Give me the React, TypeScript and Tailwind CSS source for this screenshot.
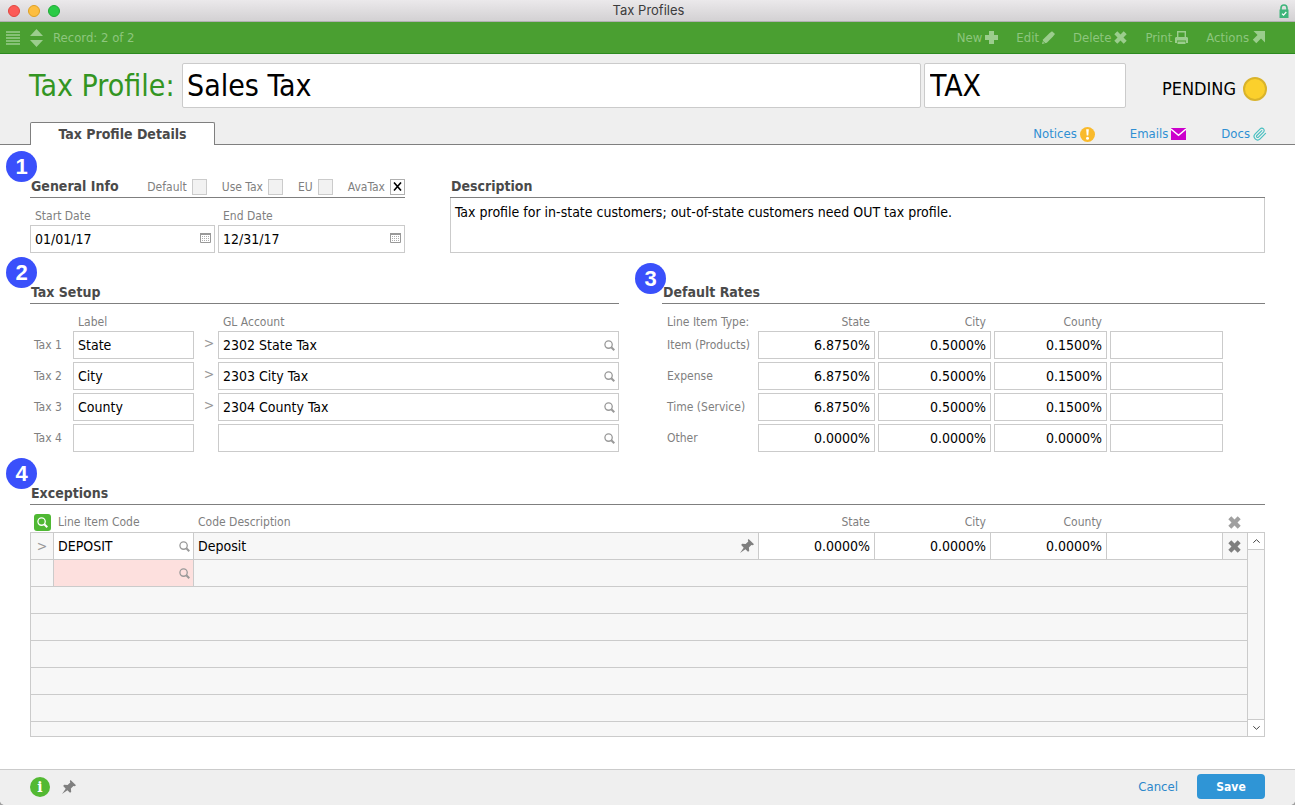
import type { ReactNode } from "react";
import { LuPaperclip } from "react-icons/lu";

const labelText = "text-[12px] leading-4 text-[#7f7f7f]";
const fieldBox = "h-7 w-full min-w-0 border border-[#cbcbcb] bg-white px-1 text-[14px] text-black outline-none";

function MagnifierIcon({ className = "text-[#999]" }: { className?: string }) {
  return (
    <svg className={className} width="11" height="11" viewBox="0 0 12 12" fill="none" stroke="currentColor">
      <circle cx="5" cy="5" r="4" strokeWidth="1.4" />
      <path d="M8 8l3.2 3.2" strokeWidth="2.2" />
    </svg>
  );
}

function CrossIcon({ className = "" }: { className?: string }) {
  return (
    <svg className={className} width="13" height="13" viewBox="0 0 13 13" fill="currentColor">
      <path d="M3.3.3 6.5 3.5 9.7.3 12.7 3.3 9.5 6.5l3.2 3.2-3 3-3.2-3.2-3.2 3.2-3-3L3.5 6.5.3 3.3z" />
    </svg>
  );
}

function PlusIcon() {
  return (
    <svg width="13" height="13" viewBox="0 0 13 13" fill="currentColor">
      <path d="M4 0h5v4h4v5H9v4H4V9H0V4h4z" />
    </svg>
  );
}

function PencilIcon() {
  return (
    <svg width="13" height="13" viewBox="0 0 13 13" fill="currentColor">
      <path d="M7.4 2.2 10 .2 13 3 11 5.6 4.9 11.7 0 13l1.3-4.700z" />
      <path d="M.9 10.2l2.1 2.1" stroke="#4a9f31" strokeWidth=".9" />
    </svg>
  );
}

function PrinterIcon() {
  return (
    <svg width="13" height="13" viewBox="0 0 13 13" fill="currentColor">
      <path fillRule="evenodd" d="M2 0h9v6h1.2l.8 1v5h-2V9.500H2V12H0V7l.8-1H2zM3.400 1.400V6h6.200V1.400z" />
      <path d="M2.500 10.500h8V13h-8z" />
    </svg>
  );
}

function ArrowIcon() {
  return (
    <svg width="13" height="13" viewBox="0 0 13 13" fill="currentColor">
      <path d="M1.500 0H13v11.500L9 7.500l-4.700 4.700L.800 8.700 5.500 4z" />
    </svg>
  );
}

function NoticeIcon() {
  return (
    <svg width="15" height="15" viewBox="0 0 15 15">
      <circle cx="7.500" cy="7.500" r="7.500" fill="#f9ba2c" />
      <path d="M6.200 2.300h2.600l-.5 6.200H6.700z" fill="#fff" />
      <circle cx="7.500" cy="11.200" r="1.500" fill="#fff" />
    </svg>
  );
}

function MailIcon() {
  return (
    <svg width="15" height="12" viewBox="0 0 15 12">
      <path d="M0 0h15v12H0z" fill="#cc00cc" />
      <path d="M0 1l7.500 6.300L15 1" fill="none" stroke="#fff" strokeWidth="1.400" />
    </svg>
  );
}

function CalendarIcon() {
  return (
    <svg width="11" height="10" viewBox="0 0 11 10" className="text-[#999]" fill="none" stroke="currentColor">
      <path d="M.5.5h10v9H.5z" />
      <path d="M0 1h11" strokeWidth="2" />
      <path d="M2 3.500h7M2 5.500h7M2 7.500h7" strokeDasharray="1 1" opacity=".8" />
    </svg>
  );
}

function PinIcon() {
  return (
    <svg width="14" height="14" viewBox="0 0 14 14" className="text-[#7f7f7f]" fill="currentColor">
      <path d="M8.600 0 14 5.200l-1.300 1-1.300-.3-2.500 2.500.3 3.600-1.200.8-2.600-2.500L0 14l3.700-5.300L1.200 6l.9-1.200 3.500.3 2.700-2.600-.5-1.400z" />
    </svg>
  );
}

function StepBadge({ n, place }: { n: number; place: string }) {
  return (
    <span className={`absolute z-10 flex size-[31px] items-center justify-center rounded-full bg-[#3a50fb] font-['Liberation_Sans',sans-serif] text-[22px] font-bold text-white ${place}`}>
      {n}
    </span>
  );
}

function SectionHead({ title, n, place = "-left-6 -top-[25px]", children }: { title: string; n?: number; place?: string; children?: ReactNode }) {
  return (
    <div className="relative flex h-[22px] items-center justify-between border-b border-[#7f7f7f]">
      {n && <StepBadge n={n} place={place} />}
      <h2 className="pl-px text-[14px] font-bold text-[#4a4a4a]">{title}</h2>
      {children}
    </div>
  );
}

function ToolButton({ label, icon }: { label: string; icon: ReactNode }) {
  return (
    <button className="flex items-center gap-[3px] text-[13px]">
      {label}
      <span className="text-[#9bcd8d]">{icon}</span>
    </button>
  );
}

function Tick({ label, checked = false }: { label: string; checked?: boolean }) {
  return (
    <label className={`flex items-center gap-[5px] ${labelText}`}>
      {label}
      <span className="grid">
        <input
          type="checkbox"
          defaultChecked={checked}
          className="peer col-start-1 row-start-1 h-4 w-[15px] appearance-none border border-[#cbcbcb] bg-[#f2f2f2] checked:border-[#b0b0b0] checked:bg-white"
        />
        <svg className="pointer-events-none invisible col-start-1 row-start-1 place-self-center peer-checked:visible" width="9" height="9" viewBox="0 0 9 9" stroke="#000" strokeWidth="1.600">
          <path d="M1 .5l7 8M8 .5l-7 8" />
        </svg>
      </span>
    </label>
  );
}

function DateField({ id, label, value }: { id: string; label: string; value: string }) {
  return (
    <div>
      <div className="flex h-[27px] items-end pb-px pl-[5px]">
        <label htmlFor={id} className={labelText}>{label}</label>
      </div>
      <div className="relative">
        <input id={id} defaultValue={value} className={fieldBox} />
        <button aria-label={`Pick ${label}`} className="absolute right-1 top-2">
          <CalendarIcon />
        </button>
      </div>
    </div>
  );
}

const taxes = [
  { label: "State", account: "2302 State Tax" },
  { label: "City", account: "2303 City Tax" },
  { label: "County", account: "2304 County Tax" },
  { label: "", account: "" },
];

const rateColumns = ["State", "City", "County", ""];

const rates = [
  { type: "Item (Products)", values: ["6.8750%", "0.5000%", "0.1500%", ""] },
  { type: "Expense", values: ["6.8750%", "0.5000%", "0.1500%", ""] },
  { type: "Time (Service)", values: ["6.8750%", "0.5000%", "0.1500%", ""] },
  { type: "Other", values: ["0.0000%", "0.0000%", "0.0000%", ""] },
];

const cell = "border-t border-[#cbcbcb] p-0";
const cellLine = "border-l border-t border-[#cbcbcb] p-0";

function ExceptionsTable() {
  return (
    <table className="flex-1 table-fixed border-separate border-spacing-0 bg-transparent">
      <colgroup>
        <col className="w-[23px]" />
        <col className="w-[140px]" />
        <col />
        <col className="w-[116px]" />
        <col className="w-[116px]" />
        <col className="w-[116px]" />
        <col className="w-[116px]" />
        <col className="w-[25px]" />
      </colgroup>
      <thead>
        <tr className={`h-[27px] ${labelText}`}>
          <th className="p-0 pl-1 pt-[7px] font-normal">
            <button aria-label="Search exceptions" className="flex size-[17px] items-center justify-center rounded-[3px] bg-[#4fb833]">
              <MagnifierIcon className="text-white" />
            </button>
          </th>
          <th className="p-0 pl-[5px] pt-[7px] text-left font-normal">Line Item Code</th>
          <th className="p-0 pl-[5px] pt-[7px] text-left font-normal">Code Description</th>
          {rateColumns.map((c, i) => (
            <th key={i} className="p-0 pr-1 pt-[7px] text-right font-normal">{c}</th>
          ))}
          <th className="p-0 pl-1.5 pt-[7px]">
            <button aria-label="Clear exceptions" className="block text-[#a0a0a0]">
              <CrossIcon />
            </button>
          </th>
        </tr>
      </thead>
      <tbody className="bg-[#f7f7f7] text-[14px] text-black">
        <tr className="h-[27px]">
          <td className={`${cellLine} text-center text-[#999]`}>
            <button aria-label="Open line">&gt;</button>
          </td>
          <td className={`${cellLine} bg-white`}>
            <div className="flex items-center pr-[3px]">
              <input aria-label="Line Item Code" defaultValue="DEPOSIT" className="h-[26px] w-full min-w-0 bg-transparent pl-1 outline-none" />
              <button aria-label="Look up code"><MagnifierIcon /></button>
            </div>
          </td>
          <td className={cellLine}>
            <div className="flex items-center justify-between pl-1 pr-1">
              Deposit
              <button aria-label="Pin line"><PinIcon /></button>
            </div>
          </td>
          {["0.0000%", "0.0000%", "0.0000%", ""].map((v, i) => (
            <td key={i} className={`${cellLine} bg-white`}>
              <input aria-label={`Exception rate ${i + 1}`} defaultValue={v} className="block h-[26px] w-full bg-transparent pr-1 text-right outline-none" />
            </td>
          ))}
          <td className={`${cellLine} pl-[5px]`}>
            <button aria-label="Remove line" className="block text-[#7f7f7f]"><CrossIcon /></button>
          </td>
        </tr>
        <tr className="h-[27px]">
          <td className={cellLine} />
          <td className={`${cellLine} bg-[#fde0de]`}>
            <div className="flex items-center pr-[3px]">
              <input aria-label="New Line Item Code" className="h-[26px] w-full min-w-0 bg-transparent pl-1 outline-none" />
              <button aria-label="Look up new code"><MagnifierIcon /></button>
            </div>
          </td>
          <td className={cellLine} />
          <td colSpan={5} className={cell} />
        </tr>
        {[0, 1, 2, 3, 4].map((i) => (
          <tr key={i} className="h-[27px]">
            <td colSpan={8} className={cellLine} />
          </tr>
        ))}
        <tr className="h-4">
          <td colSpan={8} className={`${cellLine} border-b`} />
        </tr>
      </tbody>
    </table>
  );
}

export default function App() {
  return (
    <div className="min-h-screen bg-[#a0a0a0] font-['DejaVu_Sans_Condensed','DejaVu_Sans',sans-serif]">
      <div className="flex min-h-screen flex-col overflow-hidden rounded-b-[5px] bg-white">
        <div className="flex h-[22px] items-center border-b border-[#b1b0b1] bg-linear-to-b from-[#ebe9eb] to-[#d3d1d3]">
          <div className="flex flex-1 gap-2 pl-2">
            <button aria-label="Close" className="size-3 rounded-full border border-[#e2463f] bg-[#fc5b57]" />
            <button aria-label="Minimise" className="size-3 rounded-full border border-[#dfa023] bg-[#fdbe41]" />
            <button aria-label="Zoom" className="size-3 rounded-full border border-[#1faa35] bg-[#2bcb46]" />
          </div>
          <h1 className="font-[Inter,sans-serif] text-[13px] text-[#3c3c3c]">Tax Profiles</h1>
          <div className="flex flex-1 justify-end pr-1.5">
            <svg width="10" height="14" viewBox="0 0 10 14" fill="none">
              <path d="M2 6V4a3 3 0 0 1 6 0v2" stroke="#3fb57b" strokeWidth="1.600" />
              <path d="M.5 5.500h9V14h-9z" fill="#3fb57b" />
              <path d="M3 9.700l1.500 1.500L7.300 8" stroke="#fff" strokeWidth="1.200" />
            </svg>
          </div>
        </div>

        <div className="flex h-8 items-center justify-between border-b border-[#2c8a1f] bg-[#4a9f31] pl-1.5 pr-[30px] text-[#8ec67e]">
          <div className="flex items-center gap-2.5 text-[#9bcd8d]">
            <button aria-label="Menu">
              <svg width="14" height="14" viewBox="0 0 14 14" stroke="currentColor" strokeWidth="1.600">
                <path d="M0 1h14M0 4h14M0 7h14M0 10h14M0 13h14" />
              </svg>
            </button>
            <button aria-label="Change record">
              <svg width="13" height="18" viewBox="0 0 13 18" fill="currentColor">
                <path d="M0 7l6.500-7L13 7zM0 11h13l-6.500 7z" />
              </svg>
            </button>
            <span className="text-[13px] text-[#8ec67e]">Record: 2 of 2</span>
          </div>
          <div className="flex gap-[18px]">
            <ToolButton label="New" icon={<PlusIcon />} />
            <ToolButton label="Edit" icon={<PencilIcon />} />
            <ToolButton label="Delete" icon={<CrossIcon />} />
            <ToolButton label="Print" icon={<PrinterIcon />} />
            <ToolButton label="Actions" icon={<ArrowIcon />} />
          </div>
        </div>

        <header className="border-b border-[#7f7f7f] bg-[#efefef] pl-[29px] pr-7 pt-[9px]">
          <div className="flex items-center">
            <label htmlFor="profile" className="w-[153px] shrink-0 whitespace-nowrap text-[30px] leading-[45px] text-[#339522]">Tax Profile:</label>
            <input id="profile" defaultValue="Sales Tax" className="h-[45px] min-w-0 flex-1 rounded-xs border border-[#cbcbcb] bg-white px-1 text-[30px] text-black outline-none" />
            <input aria-label="Profile code" defaultValue="TAX" className="ml-[3px] h-[45px] w-[202px] rounded-xs border border-[#cbcbcb] bg-white px-[5px] text-[30px] text-black outline-none" />
            <div className="flex w-[141px] items-center justify-end gap-[7px] pt-1.5 text-[18px] text-black">
              PENDING
              <span className="size-6 rounded-full border-2 border-[#d9b32b] bg-[#fbd02c]" />
            </div>
          </div>
          <div className="mt-3.5 flex h-[22px] justify-between">
            <button className="ml-px h-[23px] w-[185px] rounded-t-xs border border-b-0 border-[#7f7f7f] bg-white text-[14px] font-bold text-[#4a4a4a]">Tax Profile Details</button>
            <nav className="flex items-center gap-[35px] pt-0.5 text-[13px] text-[#2f8fd3]">
              <a href="#notices" className="flex items-center gap-[3px]">Notices<NoticeIcon /></a>
              <a href="#emails" className="flex items-center gap-[3px]">Emails<MailIcon /></a>
              <a href="#docs" className="flex items-center gap-[3px]">Docs<LuPaperclip size={14} className="text-[#48bfc0]" /></a>
            </nav>
          </div>
        </header>

        <main className="flex-1 px-[30px] pb-8 pt-[31px]">
          <div className="grid grid-cols-[375px_1fr] gap-[45px]">
            <section>
              <SectionHead title="General Info" n={1}>
                <div className="flex gap-[15px]">
                  <Tick label="Default" />
                  <Tick label="Use Tax" />
                  <Tick label="EU" />
                  <Tick label="AvaTax" checked />
                </div>
              </SectionHead>
              <div className="grid grid-cols-[185px_1fr] gap-[3px]">
                <DateField id="start" label="Start Date" value="01/01/17" />
                <DateField id="end" label="End Date" value="12/31/17" />
              </div>
            </section>
            <section className="flex flex-col">
              <SectionHead title="Description" />
              <textarea
                aria-label="Description"
                defaultValue="Tax profile for in-state customers; out-of-state customers need OUT tax profile."
                className="min-h-0 w-full flex-1 resize-none border border-t-0 border-[#cbcbcb] px-1 py-1 text-[14px] leading-5 text-black outline-none"
              />
            </section>
          </div>

          <div className="mt-[29px] grid grid-cols-[1fr_603px] gap-[43px]">
            <section>
              <SectionHead title="Tax Setup" n={2} />
              <div className={`grid h-[27px] grid-cols-[43px_121px_24px_1fr] items-end pb-px ${labelText}`}>
                <span className="col-start-2 pl-[5px]">Label</span>
                <span className="col-start-4 pl-[5px]">GL Account</span>
              </div>
              <div className="grid gap-[3px]">
                {taxes.map((t, i) => (
                  <div key={i} className="grid grid-cols-[43px_121px_24px_1fr] items-center">
                    <label htmlFor={`tax${i}`} className={`pl-1 ${labelText}`}>Tax {i + 1}</label>
                    <input id={`tax${i}`} defaultValue={t.label} className={fieldBox} />
                    <span className="pb-1 pl-1.5 text-center text-[14px] leading-4 text-[#999]">{t.label && ">"}</span>
                    <div className="relative">
                      <input aria-label={`GL Account ${i + 1}`} defaultValue={t.account} className={fieldBox} />
                      <button aria-label={`Look up account ${i + 1}`} className="absolute right-1 top-[9px]">
                        <MagnifierIcon />
                      </button>
                    </div>
                  </div>
                ))}
              </div>
            </section>

            <section>
              <SectionHead title="Default Rates" n={3} place="-left-[27px] -top-[19px]" />
              <div className={`grid h-[27px] grid-cols-[93px_117px_113px_113px_113px] items-end gap-x-[3px] pb-px ${labelText}`}>
                <span className="pl-[5px]">Line Item Type:</span>
                {rateColumns.map((c, i) => (
                  <span key={i} className="pr-[5px] text-right">{c}</span>
                ))}
              </div>
              <div className="grid gap-[3px]">
                {rates.map((r) => (
                  <div key={r.type} className="grid grid-cols-[93px_117px_113px_113px_113px] items-center gap-x-[3px]">
                    <span className={`whitespace-nowrap pl-[5px] ${labelText}`}>{r.type}</span>
                    {r.values.map((v, i) => (
                      <input key={i} aria-label={`${r.type} rate ${i + 1}`} defaultValue={v} className={`${fieldBox} text-right`} />
                    ))}
                  </div>
                ))}
              </div>
            </section>
          </div>

          <section className="mt-[31px]">
            <SectionHead title="Exceptions" n={4} />
            <div className="flex">
              <ExceptionsTable />
              <div className="mt-[27px] flex w-[18px] flex-col justify-between border border-[#cbcbcb] bg-[#f7f7f7]">
                <button aria-label="Scroll up" className="flex h-[17px] items-center justify-center border-b border-[#cbcbcb] bg-white">
                  <svg width="7" height="4" viewBox="0 0 7 4" fill="none" stroke="#444"><path d="M.3 3.700l3.200-3 3.200 3" /></svg>
                </button>
                <button aria-label="Scroll down" className="flex h-[17px] items-center justify-center border-t border-[#cbcbcb] bg-white">
                  <svg width="7" height="4" viewBox="0 0 7 4" fill="none" stroke="#444"><path d="M.3.3l3.200 3 3.200-3" /></svg>
                </button>
              </div>
            </div>
          </section>
        </main>

        <footer className="flex h-9 items-center justify-between border-t border-[#cbcbcb] bg-[#efefef] px-[30px] pb-0.5">
          <div className="flex items-center gap-3">
            <button aria-label="Information" className="flex size-5 items-center justify-center rounded-full bg-[#53b933] font-['DejaVu_Serif',serif] text-[14px] font-bold leading-5 text-white">i</button>
            <button aria-label="Pin window"><PinIcon /></button>
          </div>
          <div className="flex items-center gap-[19px] text-[13px]">
            <button className="text-[#2b87cb]">Cancel</button>
            <button className="h-[25px] w-[68px] rounded-[4px] bg-[#2f95d6] text-[12px] font-bold text-white">Save</button>
          </div>
        </footer>
      </div>
    </div>
  );
}
